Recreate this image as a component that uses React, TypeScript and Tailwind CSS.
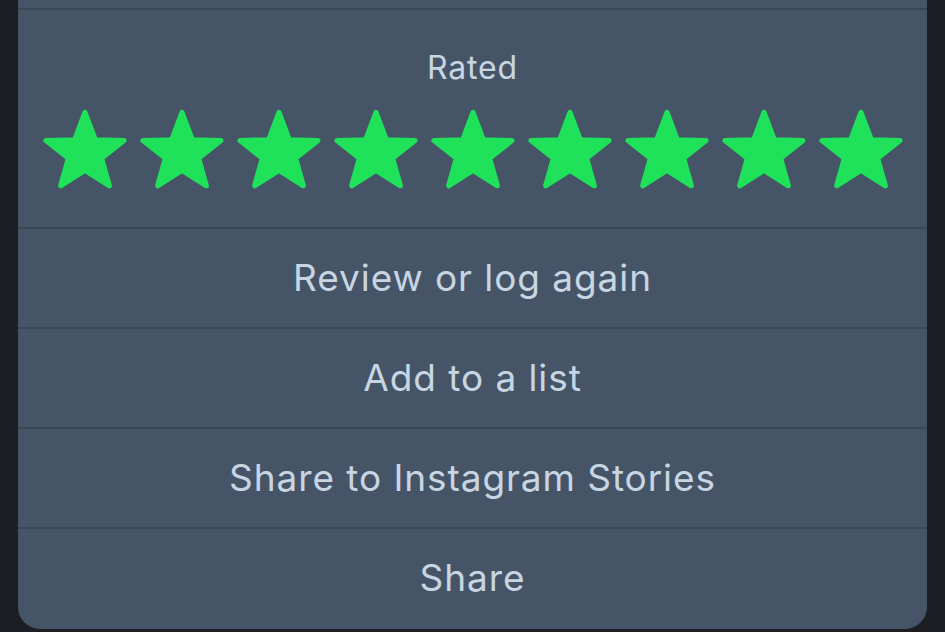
const rows = ['Review or log again', 'Add to a list', 'Share to Instagram Stories', 'Share'];

function Star() {
  return (
    <svg width="88" height="83" viewBox="-1 -2 102 96" aria-hidden="true">
      <polygon
        points="50,3 61.9,34.7 95.2,35.6 69.2,56.2 78.2,88 50,70.2 21.8,88 30.8,56.2 4.8,35.6 38.1,34.7"
        fill="#1fe25a"
        stroke="#1fe25a"
        strokeWidth="6"
        strokeLinejoin="round"
      />
    </svg>
  );
}

export default function App() {
  return (
    <div className="h-[632px] w-[945px] overflow-hidden bg-[#1c1e23] pl-[18px] pr-[18px] font-['Inter',sans-serif]">
      <div className="flex h-[629px] flex-col rounded-b-[22px] bg-[#455567]">
        {/* bit of the row above */}
        <div className="h-[8px]" />

        {/* rating */}
        <div className="flex h-[219px] flex-col items-center border-t-2 border-[#3b4755]">
          <p className="mt-[40px] text-[32px] leading-[36px] tracking-[0.025em] text-[#c8d5e2]">Rated</p>
          <div className="mt-[22px] flex gap-[9px]">
            {Array.from({ length: 9 }).map((_, i) => (
              <Star key={i} />
            ))}
          </div>
        </div>

        {rows.map((label) => (
          <div
            key={label}
            className="flex h-[100px] shrink-0 items-center justify-center border-t-2 border-[#3b4755] text-[37px] tracking-[0.025em] text-[#c8d5e2]"
          >
            {label}
          </div>
        ))}
      </div>
    </div>
  );
}
